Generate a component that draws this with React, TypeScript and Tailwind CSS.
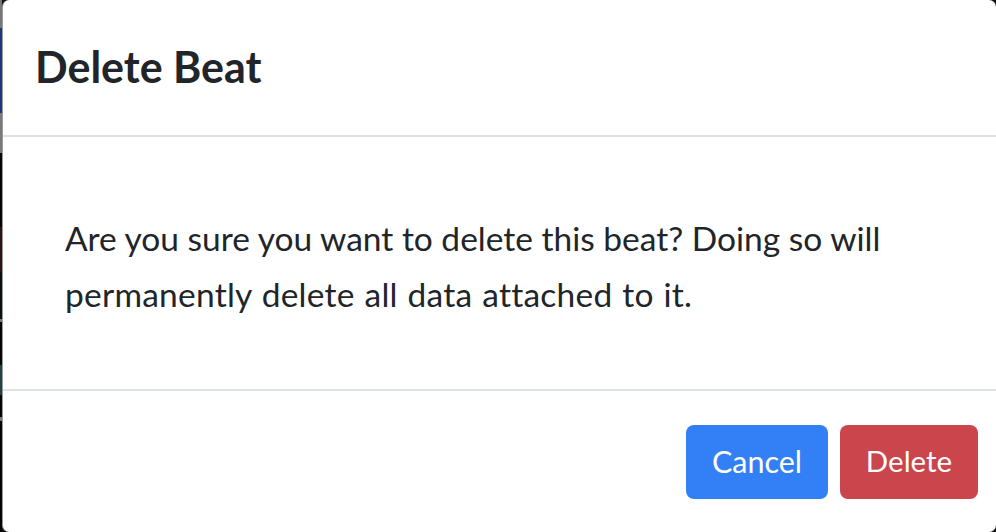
import React from "react";

export default function App() {
  return (
    <div className="w-[996px] h-[532px] flex bg-[#111] overflow-hidden" style={{ fontFamily: "Lato, 'Noto Sans', sans-serif" }}>
      <div className="w-[2px] h-full flex flex-col shrink-0">
        <div className="h-[28px] bg-[#777]" />
        <div className="h-[85px] bg-[#1c3a78]" />
        <div className="h-[40px] bg-[#7a7a7a]" />
        <div className="h-[74px] bg-[#050505]" />
        <div className="h-[45px] bg-[#2a1414]" />
        <div className="h-[47px] bg-[#0a120c]" />
        <div className="h-[3px] bg-[#777]" />
        <div className="h-[43px] bg-[#050505]" />
        <div className="h-[30px] bg-[#1d4443]" />
        <div className="h-[22px] bg-[#050505]" />
        <div className="h-[4px] bg-[#777]" />
        <div className="flex-1 bg-[#050505]" />
      </div>
      <div className="flex-1 h-full bg-white rounded-[7px] flex flex-col border-l border-[#9a9a9a]">
        <div className="h-[137px] shrink-0 flex items-center pl-[32px] pb-[2px] border-b-2 border-[#dee2e6]">
          <h5 className="text-[43px] font-bold text-[#212529] leading-none">Delete Beat</h5>
        </div>
        <div className="h-[254px] shrink-0 px-[62px] pt-[73px] border-b-2 border-[#dee2e6]">
          <p className="text-[33.5px] leading-[56px] text-[#212529]">
            Are you sure you want to delete this beat? Doing so will
            <br />
            <span className="tracking-[0.25px] [word-spacing:1px]">permanently delete all data attached to it.</span>
          </p>
        </div>
        <div className="flex-1 flex items-center justify-end gap-[12px] pr-[18px]">
          <button className="w-[142px] h-[74px] rounded-[8px] bg-[#337ff5] text-white text-[30.5px]">Cancel</button>
          <button className="w-[138px] h-[74px] rounded-[8px] bg-[#cb454c] text-white text-[29.5px]">Delete</button>
        </div>
      </div>
    </div>
  );
}
